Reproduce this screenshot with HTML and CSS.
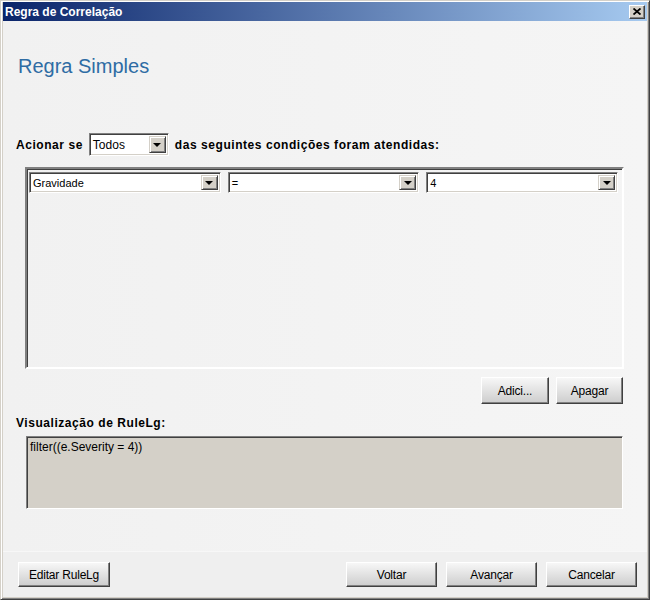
FILE: index.html
```html
<!DOCTYPE html>
<html lang="pt">
<head>
    <meta charset="UTF-8">
    <title>Regra de Correlação</title>
    <link rel="stylesheet" href="styles.css">
</head>
<body>

    <div class="window">
        <!-- Barra de título -->
        <div class="titlebar">
            <span>Regra de Correlação</span>
            <button class="close">
                <svg width="8" height="7" viewBox="0 0 8 7">
                    <path d="M0.5 0.5 L7.5 6.5 M7.5 0.5 L0.5 6.5" stroke="#000" stroke-width="1.8" fill="none"/>
                </svg>
            </button>
        </div>

        <div class="content">
            <h1>Regra Simples</h1>

            <div class="trigger">
                <span>Acionar se</span>
                <div class="combo combo-todos">
                    <span class="value">Todos</span>
                    <span class="drop"></span>
                </div>
                <span>das seguintes condições foram atendidas:</span>
            </div>

            <!-- Condições -->
            <div class="conditions">
                <div class="combo combo-cond">
                    <span class="value">Gravidade</span>
                    <span class="drop"></span>
                </div>
                <div class="combo combo-cond">
                    <span class="value">=</span>
                    <span class="drop"></span>
                </div>
                <div class="combo combo-cond">
                    <span class="value">4</span>
                    <span class="drop"></span>
                </div>
            </div>

            <div class="actions">
                <button class="btn btn-add">Adici...</button>
                <button class="btn btn-del">Apagar</button>
            </div>

            <div class="label">Visualização de RuleLg:</div>
            <div class="preview">filter((e.Severity = 4))</div>
        </div>

        <!-- Rodapé -->
        <div class="footer">
            <button class="btn btn-foot btn-edit">Editar RuleLg</button>
            <span class="spacer"></span>
            <button class="btn btn-foot">Voltar</button>
            <button class="btn btn-foot">Avançar</button>
            <button class="btn btn-foot">Cancelar</button>
        </div>
    </div>

</body>
</html>
```

FILE: styles.css
```css
* {
    box-sizing: border-box;
}

body {
    margin: 0;
    font-family: "Liberation Sans", Arial, sans-serif;
    font-size: 12px;
    color: #000;
    background: #d4d0c8;
}

/* Janela */
.window {
    width: 650px;
    height: 600px;
    display: flex;
    flex-direction: column;
    background: #d4d0c8;
    border: 1px solid;
    border-color: #d4d0c8 #404040 #404040 #d4d0c8;
    box-shadow: inset 1px 1px #fff, inset -1px -1px #808080;
    padding: 1px 2px 2px 2px;
}

.titlebar {
    height: 19px;
    display: flex;
    align-items: center;
    justify-content: space-between;
    padding: 0 2px 0 2px;
    background: linear-gradient(to right, #0a246a, #a6caf0);
    color: #fff;
    font-weight: bold;
    font-size: 12px;
}

.close {
    width: 16px;
    height: 14px;
    padding: 0;
    background: #d4d0c8;
    border: 1px solid;
    border-color: #fff #404040 #404040 #fff;
    box-shadow: inset -1px -1px #808080;
    display: flex;
    align-items: center;
    justify-content: center;
}

/* Conteúdo */
.content {
    flex: 1;
    background: linear-gradient(to right, #f1f1f1, #f5f5f5);
    padding: 34px 23px 0 13px;
}

h1 {
    margin: 0 0 0 2px;
    font-size: 20px;
    line-height: 23px;
    font-weight: normal;
    color: #2e6ca4;
}

.trigger {
    display: flex;
    align-items: center;
    gap: 6px;
    height: 23px;
    margin-top: 55px;
    font-weight: bold;
    letter-spacing: 0.55px;
}

/* Combo box */
.combo {
    display: flex;
    background: #fff;
    border: 1px solid;
    border-color: #808080 #fff #fff #808080;
    box-shadow: inset 1px 1px #404040, inset -1px -1px #d4d0c8;
    padding: 2px 2px 2px 3px;
    font-weight: normal;
    letter-spacing: 0;
}

.combo .value {
    flex: 1;
    display: flex;
    align-items: center;
    font-size: 11px;
}

.combo-todos {
    width: 80px;
    height: 23px;
}

.combo-todos .value {
    font-size: 12px;
}

.combo-cond {
    flex: 1;
    height: 21px;
}

.drop {
    width: 17px;
    background: #d4d0c8;
    border: 1px solid;
    border-color: #d4d0c8 #404040 #404040 #d4d0c8;
    box-shadow: inset 1px 1px #fff, inset -1px -1px #808080;
    display: flex;
    align-items: center;
    justify-content: center;
}

.drop::after {
    content: "";
    border-left: 4px solid transparent;
    border-right: 4px solid transparent;
    border-top: 4px solid #000;
}

/* Painel das condições */
.conditions {
    height: 202px;
    margin: 11px 0 0 9px;
    border: 2px solid;
    border-color: #808080 #fff #fff #808080;
    box-shadow: inset 1px 1px #404040;
    padding: 3px 4px 0 2px;
    display: flex;
    align-items: flex-start;
    gap: 7px;
}

.actions {
    display: flex;
    justify-content: flex-end;
    gap: 7px;
    margin-top: 8px;
    padding-right: 1px;
}

/* Botões */
.btn {
    height: 27px;
    padding: 0;
    border: 1px solid;
    border-color: #fff #404040 #404040 #fff;
    box-shadow: inset -1px -1px #808080;
    background: linear-gradient(#f7f7f7, #cdcdcd);
    font-family: "Liberation Sans", Arial, sans-serif;
    font-size: 12px;
    letter-spacing: -0.2px;
    color: #000;
}

.btn-add {
    width: 68px;
}

.btn-del {
    width: 67px;
}

.label {
    margin-top: 12px;
    line-height: 14px;
    font-weight: bold;
    letter-spacing: 0.55px;
}

.preview {
    height: 73px;
    margin: 6px 1px 0 10px;
    background: #d4d0c8;
    border: 1px solid;
    border-color: #808080 #fff #fff #808080;
    box-shadow: inset 1px 1px #404040;
    padding: 3px 3px;
    line-height: 14px;
}

/* Rodapé */
.footer {
    height: 46px;
    display: flex;
    align-items: center;
    gap: 9px;
    padding: 0 10px 0 15px;
    background: #efefef;
    border-top: 1px solid #f7f7f7;
}

.footer .spacer {
    flex: 1;
}

.btn-foot {
    width: 91px;
    height: 25px;
}

.btn-edit {
    width: 92px;
}
```
